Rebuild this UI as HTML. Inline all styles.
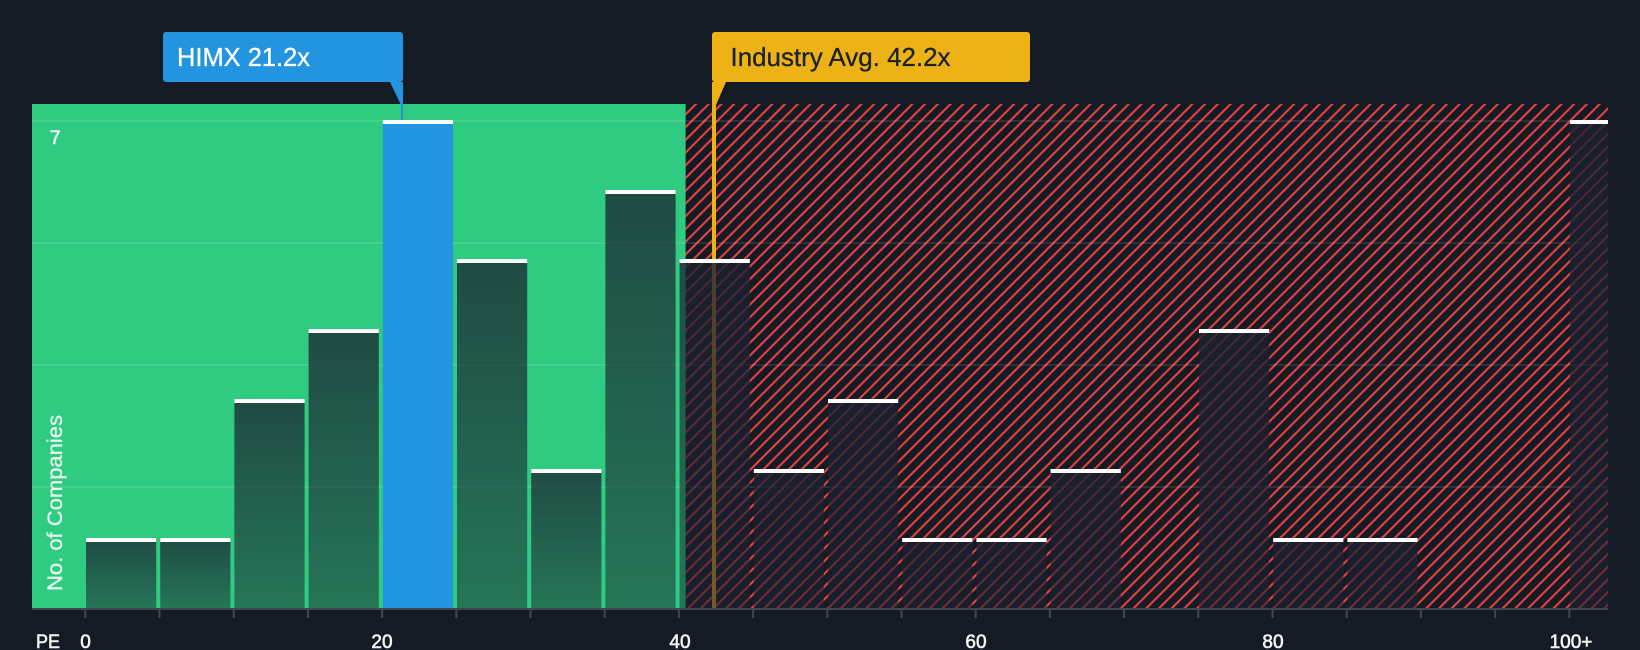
<!DOCTYPE html>
<html>
<head>
<meta charset="utf-8">
<style>
html,body{margin:0;padding:0;background:#151b24;width:1640px;height:650px;overflow:hidden}
svg{display:block}
text{font-family:"Liberation Sans",Arial,sans-serif}
.t{fill:#f2f3f4;font-size:19px;stroke:#f2f3f4;stroke-width:.6px}
</style>
</head>
<body>
<svg width="1640" height="650" viewBox="0 0 1640 650" xmlns="http://www.w3.org/2000/svg">
<defs>
<pattern id="h" patternUnits="userSpaceOnUse" width="9" height="9" patternTransform="translate(696,104) rotate(-45)">
<rect x="0" y="-1.05" width="9" height="2.1" fill="#e64141"/>
<rect x="0" y="7.95" width="9" height="2.1" fill="#e64141"/>
</pattern>
<linearGradient id="g" x1="0" y1="0" x2="0" y2="1">
<stop offset="0" stop-color="#1b2030" stop-opacity=".75"/>
<stop offset="1" stop-color="#1b2030" stop-opacity=".5"/>
</linearGradient>
<linearGradient id="r" x1="0" y1="0" x2="0" y2="1">
<stop offset="0" stop-color="#1b2030" stop-opacity=".8"/>
<stop offset="1" stop-color="#1b2030" stop-opacity=".58"/>
</linearGradient>
</defs>
<rect width="1640" height="650" fill="#151b24"/>
<rect x="32" y="104" width="653.6" height="504" fill="#2fcb80"/>
<rect x="685.6" y="104" width="922.4" height="504" fill="url(#h)"/>
<g fill="#fff" fill-opacity=".1">
<rect x="32" y="120" width="1576" height="2"/>
<rect x="32" y="242" width="1576" height="2"/>
<rect x="32" y="364" width="1576" height="2"/>
<rect x="32" y="486" width="1576" height="2"/>
</g>
<path d="M390 82 L401 105 V120 H403 V82 Z" fill="#2394df"/>
<path d="M726 82 L716 105 V608 H712 V82 Z" fill="#edb216"/>
<g fill="url(#g)">
<rect x="86" y="538" width="70.2" height="70"/>
<rect x="160.2" y="538" width="70.2" height="70"/>
<rect x="234.4" y="399" width="70.2" height="209"/>
<rect x="308.6" y="329" width="70.2" height="279"/>
<rect x="457" y="260" width="70.2" height="348"/>
<rect x="531.2" y="469" width="70.2" height="139"/>
<rect x="605.4" y="190" width="70.2" height="418"/>
<rect x="679.6" y="260" width="6" height="348"/>
</g>
<rect x="382.8" y="120" width="70.2" height="488" fill="#2394df"/>
<g fill="url(#r)">
<rect x="685.6" y="260" width="64.2" height="348"/>
<rect x="753.8" y="469" width="70.2" height="139"/>
<rect x="828" y="399" width="70.2" height="209"/>
<rect x="902.2" y="538" width="70.2" height="70"/>
<rect x="976.4" y="538" width="70.2" height="70"/>
<rect x="1050.6" y="469" width="70.2" height="139"/>
<rect x="1199" y="329" width="70.2" height="279"/>
<rect x="1273.2" y="538" width="70.2" height="70"/>
<rect x="1347.4" y="538" width="70.2" height="70"/>
<rect x="1570" y="120" width="38" height="488"/>
</g>
<g fill="#fff">
<rect x="86" y="538" width="70.2" height="4"/>
<rect x="160.2" y="538" width="70.2" height="4"/>
<rect x="234.4" y="399" width="70.2" height="4"/>
<rect x="308.6" y="329" width="70.2" height="4"/>
<rect x="382.8" y="120" width="70.2" height="4"/>
<rect x="457" y="259" width="70.2" height="4"/>
<rect x="531.2" y="469" width="70.2" height="4"/>
<rect x="605.4" y="190" width="70.2" height="4"/>
<rect x="679.6" y="259" width="70.2" height="4"/>
<rect x="753.8" y="469" width="70.2" height="4"/>
<rect x="828" y="399" width="70.2" height="4"/>
<rect x="902.2" y="538" width="70.2" height="4"/>
<rect x="976.4" y="538" width="70.2" height="4"/>
<rect x="1050.6" y="469" width="70.2" height="4"/>
<rect x="1199" y="329" width="70.2" height="4"/>
<rect x="1273.2" y="538" width="70.2" height="4"/>
<rect x="1347.4" y="538" width="70.2" height="4"/>
<rect x="1570" y="120" width="38" height="4"/>
</g>
<rect x="32" y="608" width="1576" height="2" fill="#3f4652"/>
<g fill="#3f4652">
<rect x="84.3" y="610" width="2" height="8"/><rect x="158.5" y="610" width="2" height="8"/><rect x="232.7" y="610" width="2" height="8"/><rect x="306.9" y="610" width="2" height="8"/><rect x="381.1" y="610" width="2" height="8"/><rect x="455.3" y="610" width="2" height="8"/><rect x="529.5" y="610" width="2" height="8"/><rect x="603.7" y="610" width="2" height="8"/><rect x="677.9" y="610" width="2" height="8"/><rect x="752.1" y="610" width="2" height="8"/><rect x="826.3" y="610" width="2" height="8"/><rect x="900.5" y="610" width="2" height="8"/><rect x="974.7" y="610" width="2" height="8"/><rect x="1048.9" y="610" width="2" height="8"/><rect x="1123.1" y="610" width="2" height="8"/><rect x="1197.3" y="610" width="2" height="8"/><rect x="1271.5" y="610" width="2" height="8"/><rect x="1345.7" y="610" width="2" height="8"/><rect x="1419.9" y="610" width="2" height="8"/><rect x="1494.1" y="610" width="2" height="8"/><rect x="1568.3" y="610" width="2" height="8"/>
</g>
<rect x="163" y="32" width="240" height="50" rx="3" fill="#2394df"/>
<rect x="712" y="32" width="318" height="50" rx="3" fill="#edb216"/>
<text x="177" y="66" font-size="26" fill="#fff" stroke="#fff" stroke-width=".3" textLength="133" lengthAdjust="spacingAndGlyphs">HIMX 21.2x</text>
<text x="730.5" y="66" font-size="26" fill="#1b222d" stroke="#1b222d" stroke-width=".3" textLength="220" lengthAdjust="spacingAndGlyphs">Industry Avg. 42.2x</text>
<text class="t" x="50" y="144" textLength="11">7</text>
<text class="t" x="36" y="648" textLength="24" lengthAdjust="spacingAndGlyphs">PE</text>
<text class="t" x="85.5" y="648" text-anchor="middle">0</text>
<text class="t" x="382" y="648" text-anchor="middle">20</text>
<text class="t" x="680" y="648" text-anchor="middle">40</text>
<text class="t" x="976" y="648" text-anchor="middle">60</text>
<text class="t" x="1273" y="648" text-anchor="middle">80</text>
<text class="t" x="1571" y="648" text-anchor="middle">100+</text>
<text transform="translate(62,591) rotate(-90)" font-size="21.5" fill="#e6f8ef" stroke="#e6f8ef" stroke-width=".3" textLength="176" lengthAdjust="spacingAndGlyphs">No. of Companies</text>
</svg>
</body>
</html>
